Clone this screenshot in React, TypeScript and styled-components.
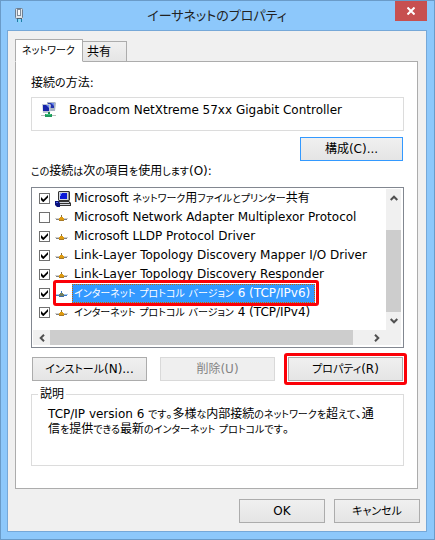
import React, { useState } from 'react';
import styled, { createGlobalStyle, css } from 'styled-components';

const GlobalStyle = createGlobalStyle`
  *, *::before, *::after { box-sizing: border-box; }
  body {
    margin: 0;
    color: #000;
    font: 12px/15px "DejaVu Sans", "Noto Sans CJK JP", sans-serif;
    font-feature-settings: "palt";
  }
  button, input { font: inherit; font-feature-settings: inherit; color: inherit; margin: 0; }
  button { padding: 0; }
`;

const Dialog = styled.main`
  display: flex;
  flex-direction: column;
  min-height: 100vh;
  padding: 0 7px 7px 6px;
  background: #8dc8fb;
  border: 1px solid #6a9bc8;
`;

const TitleBar = styled.header`
  display: grid;
  grid-template-columns: 32px 1fr 32px;
  height: 29px;
`;

const TitleIcon = styled.span`
  display: flex;
  padding: 6px 0 0 6px;
`;

const Title = styled.h1`
  margin: 0;
  text-align: center;
  font-size: 13px;
  line-height: 30px;
  font-weight: 400;
  color: #222;
  white-space: nowrap;
`;

const CloseButton = styled.button`
  display: flex;
  align-items: center;
  justify-content: center;
  height: 20px;
  border: 0;
  background: #c75050;
`;

const Client = styled.div`
  flex: 1;
  display: flex;
  flex-direction: column;
  padding: 8px 6px 8px 7px;
  background: #f0f0f0;
  border: 1px solid #76a8d8;
`;

const TabList = styled.div`
  display: flex;
  align-items: flex-end;
  height: 23px;
`;

const Tab = styled.button<{ $active?: boolean }>`
  height: 21px;
  width: 44px;
  padding: 0 8px 0 4px;
  border: 1px solid #acacac;
  border-left: 0;
  background: linear-gradient(#f0f0f0, #e5e5e5);
  text-align: left;
  line-height: 18px;
  white-space: nowrap;
  ${(p) =>
    p.$active &&
    css`
      position: relative;
      z-index: 1;
      height: 23px;
      width: 68px;
      padding: 0 6px;
      border-left: 1px solid #acacac;
      border-bottom-color: #fff;
      background: #fff;
    `}
`;

const Panel = styled.section`
  display: flex;
  flex-direction: column;
  margin: -1px 2px 0 0;
  padding: 14px 13px 22px 15px;
  background: #fff;
  border: 1px solid #acacac;
`;

const Caption = styled.div`
  height: 15px;
`;

const Adapter = styled.div`
  display: flex;
  align-items: flex-start;
  gap: 12px;
  height: 34px;
  margin-top: 6px;
  padding: 3px 9px;
  border: 1px solid #dcdcdc;
`;

const AdapterName = styled.span`
  line-height: 18px;
  white-space: nowrap;
`;

const PushButton = styled.button<{ $width?: number; $focused?: boolean }>`
  position: relative;
  height: 24px;
  width: ${(p) => (p.$width ? `${p.$width}px` : 'auto')};
  border: 1px solid ${(p) => (p.$focused ? '#3399ff' : '#acacac')};
  background: linear-gradient(#f0f0f0, #e5e5e5);
  line-height: 20px;
  white-space: nowrap;
  &:disabled {
    border-color: #d9d9d9;
    background: #efefef;
    color: #838383;
  }
`;

const Marker = styled.span`
  position: absolute;
  inset: -5px;
  border: 3px solid #fb0007;
  border-radius: 3px;
  pointer-events: none;
`;

const ConfigureRow = styled.div`
  display: flex;
  justify-content: flex-end;
  margin: 6px 1px 3px 0;
`;

const ListFrame = styled.div`
  display: grid;
  grid-template-columns: 1fr 15px;
  grid-template-rows: 141px 15px;
  margin-top: 8px;
  padding: 1px 2px 2px 1px;
  border: 1px solid #828790;
`;

const List = styled.ul`
  margin: 0;
  padding: 0 0 0 6px;
  list-style: none;
`;

const Item = styled.li`
  display: flex;
  align-items: center;
  height: 19px;
`;

const CheckHolder = styled.span`
  position: relative;
  display: flex;
  width: 11px;
  height: 11px;
  svg {
    position: absolute;
    inset: 0;
    pointer-events: none;
  }
`;

const CheckInput = styled.input`
  appearance: none;
  width: 11px;
  height: 11px;
  border: 1px solid #707070;
  background: #fff;
`;

const ItemLabel = styled.label`
  position: relative;
  display: flex;
  align-items: center;
  height: 19px;
  margin-left: 5px;
`;

const ItemIcon = styled.span`
  display: flex;
  width: 17px;
`;

const ItemText = styled.span<{ $selected?: boolean }>`
  height: 19px;
  padding: 0 2px;
  line-height: 18px;
  white-space: nowrap;
  ${(p) =>
    p.$selected &&
    css`
      padding-right: 5px;
      background: #3399ff;
      color: #fff;
      outline: 1px dotted #c86400;
      outline-offset: -1px;
    `}
`;

const ItemMarker = styled(Marker)`
  inset: -4px -4px -3px -2px;
`;

const VerticalBar = styled.div`
  display: grid;
  grid-template-rows: 1fr 82px 18px;
  background: #f0f0f0;
`;

const HorizontalBar = styled.div`
  grid-column: 1 / -1;
  display: grid;
  grid-template-columns: 17px 1fr 48px;
  background: #f0f0f0;
`;

const ScrollButton = styled.button`
  display: flex;
  align-items: center;
  justify-content: center;
  border: 0;
  background: none;
`;

const UpButton = styled(ScrollButton)`
  align-items: flex-start;
  padding-top: 6px;
`;

const Thumb = styled.div`
  background: #cdcdcd;
`;

const ActionRow = styled.div`
  display: grid;
  grid-template-columns: repeat(3, 1fr);
  column-gap: 13px;
  margin: 9px 1px 0;
`;

const Description = styled.fieldset`
  min-width: 0;
  height: 79px;
  margin: 6px 0 0;
  padding: 5px 20px 0 16px;
  border: 1px solid #dcdcdc;
`;

const Legend = styled.legend`
  margin-left: -10px;
  padding: 0 2px;
`;

const Paragraph = styled.p`
  margin: 0;
`;

const Footer = styled.footer`
  display: flex;
  justify-content: flex-end;
  gap: 9px;
  margin-top: 10px;
`;

const KanaRun = styled.span<{ $small?: boolean }>`
  font-size: ${(p) => (p.$small ? 10 : 11)}px;
`;

/** Sets runs of kana slightly smaller than the kanji and Latin text around them. */
function Text({ children, small }: { children: string; small?: boolean }) {
  return (
    <>
      {children.split(/([\u3041-\u30ff]+)/).map((part, i) =>
        i % 2 ? <KanaRun key={i} $small={small}>{part}</KanaRun> : part,
      )}
    </>
  );
}

const EthernetPlugIcon = () => (
  <svg width="12" height="17" viewBox="0 0 12 17" fill="none">
    <path d="M9.500 2v10" stroke="#f4f8fb" />
    <rect x="7.500" y="1.500" width="7" height="10" transform="translate(-5 0)" rx="1" fill="#dfe5eb" stroke="#6d7e90" />
    <rect x="4.500" y="2.500" width="3" height="6" fill="#f6f8fa" stroke="#7f8c9a" />
    <path d="M4 11h5v1H4z" fill="#4f6270" />
    <path d="M4.500 12v3M8.500 12v3" stroke="#1c7fa6" />
    <path d="M6.500 12v4" stroke="#7fe0f4" />
  </svg>
);

const AdapterIcon = () => (
  <svg width="16" height="17" viewBox="0 0 16 17">
    <path d="M6 1h8l1 1-1 8H6z" fill="#a9b3c4" />
    <path d="M7 2h6v5H7z" fill="#2433ae" />
    <path d="M10 2h3v3z" fill="#6e8bee" />
    <path d="M1 3h8l1 1-1 8H2z" fill="#bbc5d2" />
    <path d="M2 4h6v6H2z" fill="#1623a8" />
    <path d="M5 4h3v3z" fill="#6e8bee" />
    <path d="M7 11h2v2H7z" fill="#22864b" />
    <path d="M0 14h15v1H0z" fill="#b9c0bc" />
    <path d="M4 13h7v3H4z" fill="#1f9a5b" />
    <path d="M5 13h5v1H5z" fill="#3cc880" />
  </svg>
);

const ComputerIcon = () => (
  <svg width="16" height="16" viewBox="0 0 16 16">
    <path d="M4 0h10l1 1v8l-1 1H4L3 9V1z" fill="#333" />
    <path d="M4 1h9v8H4z" fill="#d2d5dc" />
    <path d="M5 2h7v6H5z" fill="#0a18d8" />
    <path d="M5 2h2v1H6v2H5z" fill="#7c94ff" />
    <path d="M13 1h1v8h-1z" fill="#8b8f98" />
    <path d="M3 10h11l2 2v3H3z" fill="#333" />
    <path d="M4 11h10v1H4zM5 13h10v1H5z" fill="#d2d5dc" />
    <path d="M0 10h3l2 2v4H2l-2-2z" fill="#08107a" />
    <path d="M1 11h2v1H1z" fill="#4b60e8" />
  </svg>
);

const ProtocolIcon = ({ selected }: { selected?: boolean }) => (
  <svg width="13" height="6" viewBox="0 0 13 6">
    <path d="M1 4h11v1H1z" fill={selected ? '#3b78c4' : '#808080'} />
    <path d="M0 3h4v1H0zM9 3h4v1H9z" fill={selected ? '#a9cdf3' : '#d0d0d0'} />
    <path d="M6 0h1v2H6z" fill={selected ? '#3b78c4' : '#8a7440'} />
    <path d="M5 2h3v1h1v2H4V3h1z" fill={selected ? '#75805c' : '#dd9a10'} />
    <path d="M4 5h5v1H4z" fill={selected ? '#3a6bab' : '#a87a28'} />
  </svg>
);

const Chevron = ({ d, horizontal }: { d: string; horizontal?: boolean }) => (
  <svg width={horizontal ? 6 : 8} height={horizontal ? 8 : 6} fill="none" stroke="#505050" strokeWidth="2">
    <path d={d} />
  </svg>
);

type Protocol = { name: string; checked: boolean; computer?: boolean; selected?: boolean };

const protocols: Protocol[] = [
  { name: 'Microsoft ネットワーク用ファイルとプリンター共有', checked: true, computer: true },
  { name: 'Microsoft Network Adapter Multiplexor Protocol', checked: false },
  { name: 'Microsoft LLDP Protocol Driver', checked: true },
  { name: 'Link-Layer Topology Discovery Mapper I/O Driver', checked: true },
  { name: 'Link-Layer Topology Discovery Responder', checked: true },
  { name: 'インターネット プロトコル バージョン 6 (TCP/IPv6)', checked: true, selected: true },
  { name: 'インターネット プロトコル バージョン 4 (TCP/IPv4)', checked: true },
];

function ProtocolItem({ item, id }: { item: Protocol; id: string }) {
  const [checked, setChecked] = useState(item.checked);
  return (
    <Item>
      <CheckHolder>
        <CheckInput id={id} type="checkbox" checked={checked} onChange={(e) => setChecked(e.target.checked)} />
        {checked && (
          <svg width="11" height="11" viewBox="0 0 11 11">
            <path d="M2 4l2.500 2.500L9 2v2.500L4.500 9H4L2 7z" fill="#000" />
          </svg>
        )}
      </CheckHolder>
      <ItemLabel htmlFor={id}>
        <ItemIcon>{item.computer ? <ComputerIcon /> : <ProtocolIcon selected={item.selected} />}</ItemIcon>
        <ItemText $selected={item.selected}>
          <Text small>{item.name}</Text>
        </ItemText>
        {item.selected && <ItemMarker />}
      </ItemLabel>
    </Item>
  );
}

export default function App() {
  return (
    <>
      <GlobalStyle />
      <Dialog>
        <TitleBar>
          <TitleIcon>
            <EthernetPlugIcon />
          </TitleIcon>
          <Title>イーサネットのプロパティ</Title>
          <CloseButton aria-label="閉じる">
            <svg width="8" height="8" viewBox="0 0 8 8" stroke="#fff" strokeWidth="2">
              <path d="M0.500 0.500l7 7M7.500 0.500l-7 7" />
            </svg>
          </CloseButton>
        </TitleBar>
        <Client>
          <TabList role="tablist">
            <Tab role="tab" aria-selected="true" $active><Text small>ネットワーク</Text></Tab>
            <Tab role="tab" aria-selected="false">共有</Tab>
          </TabList>
          <Panel role="tabpanel">
            <Caption><Text>接続の方法:</Text></Caption>
            <Adapter>
              <AdapterIcon />
              <AdapterName>Broadcom NetXtreme 57xx Gigabit Controller</AdapterName>
            </Adapter>
            <ConfigureRow>
              <PushButton $width={103} $focused>構成(C)...</PushButton>
            </ConfigureRow>
            <Caption><Text small>この接続は次の項目を使用します(O):</Text></Caption>
            <ListFrame>
              <List>
                {protocols.map((item, i) => (
                  <ProtocolItem key={item.name} item={item} id={`protocol-${i}`} />
                ))}
              </List>
              <VerticalBar>
                <UpButton aria-label="上へ"><Chevron d="M0.700 5L4 1.700L7.300 5" /></UpButton>
                <Thumb />
                <ScrollButton aria-label="下へ"><Chevron d="M0.700 1L4 4.300L7.300 1" /></ScrollButton>
              </VerticalBar>
              <HorizontalBar>
                <ScrollButton aria-label="左へ"><Chevron horizontal d="M5 0.700L1.700 4L5 7.300" /></ScrollButton>
                <Thumb />
                <ScrollButton aria-label="右へ"><Chevron horizontal d="M1 0.700L4.300 4L1 7.300" /></ScrollButton>
              </HorizontalBar>
            </ListFrame>
            <ActionRow>
              <PushButton><Text>インストール(N)...</Text></PushButton>
              <PushButton disabled>削除(U)</PushButton>
              <PushButton>
                <Text>プロパティ(R)</Text>
                <Marker />
              </PushButton>
            </ActionRow>
            <Description>
              <Legend>説明</Legend>
              <Paragraph>
                <Text small>
                  TCP/IP version 6 です。多様な内部接続のネットワークを超えて、通信を提供できる最新のインターネット プロトコルです。
                </Text>
              </Paragraph>
            </Description>
          </Panel>
          <Footer>
            <PushButton $width={86}>OK</PushButton>
            <PushButton $width={86}><Text>キャンセル</Text></PushButton>
          </Footer>
        </Client>
      </Dialog>
    </>
  );
}
